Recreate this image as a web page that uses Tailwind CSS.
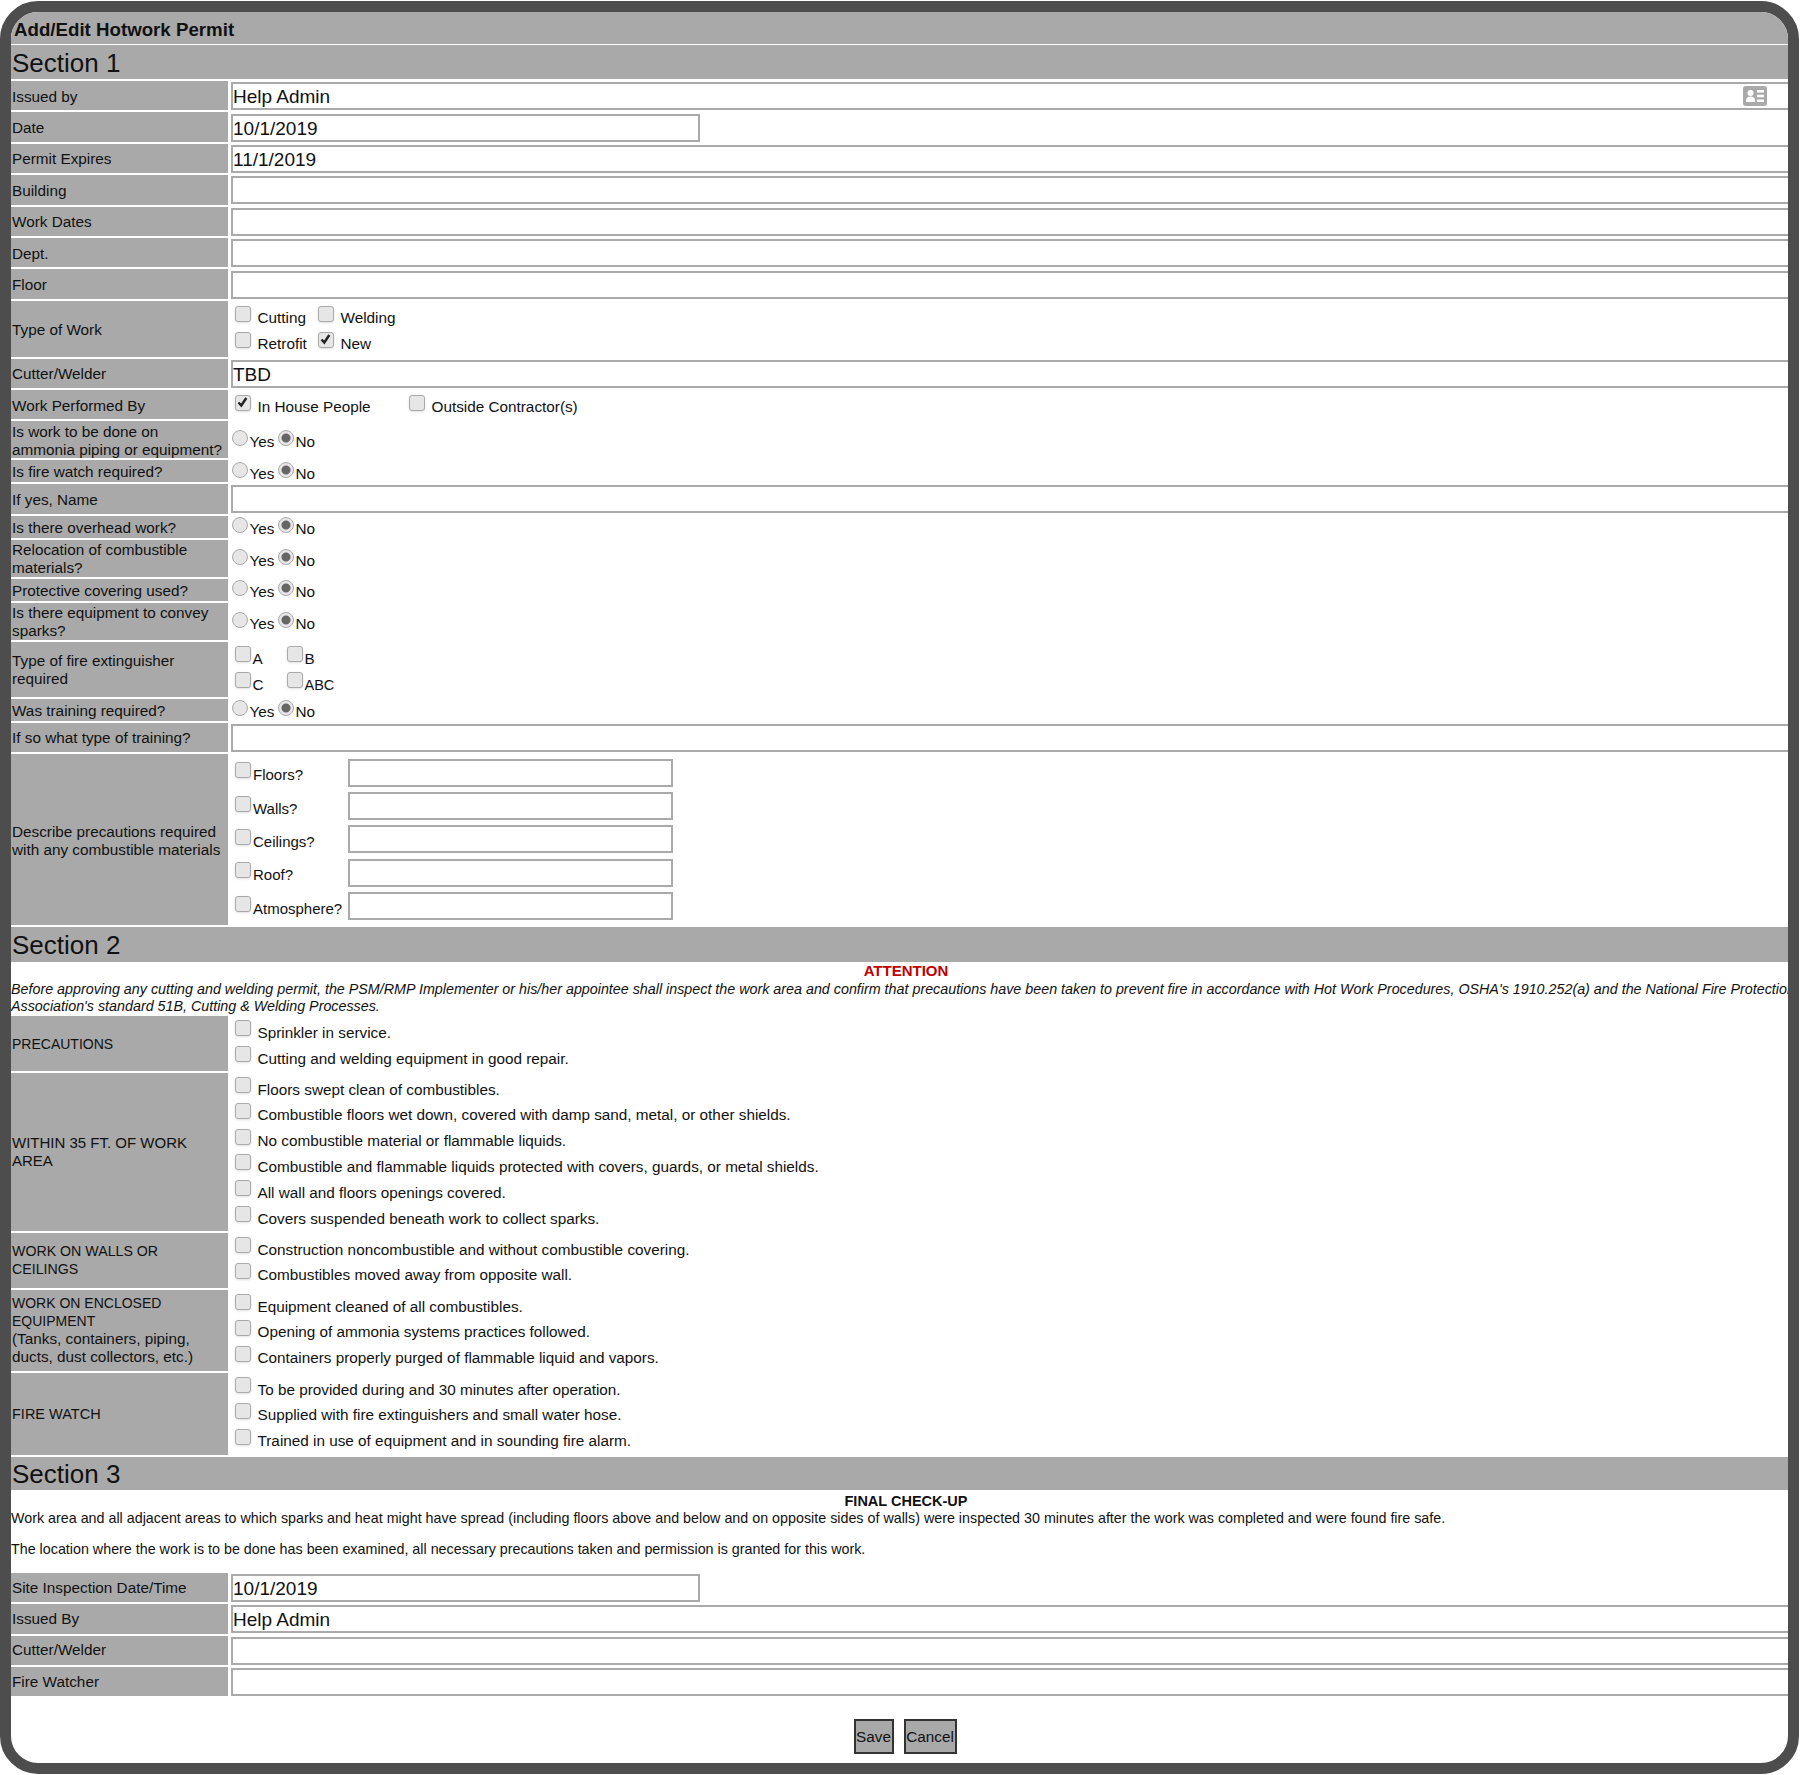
<!DOCTYPE html>
<html lang="en">
<head>
    <meta charset="UTF-8">
    <title>Add/Edit Hotwork Permit</title>
    <script src="https://cdn.jsdelivr.net/npm/@tailwindcss/browser@4"></script>
</head>
<body class="bg-white text-[#111] font-['Liberation_Sans',sans-serif] text-[15.3px] leading-[18px]">
<form class="mt-[1px] h-[1773px] w-[1799px] border-[11px] border-[#4d4d4d] rounded-[38px] overflow-hidden bg-white">

    <div class="h-[32px] bg-[#a9a9a9] flex items-center pl-[3px] pt-[3px] font-bold text-[18.7px]">Add/Edit Hotwork Permit</div>
    <div class="h-[33.7px] mt-[1px] bg-[#a9a9a9] flex items-center pl-[1px] pt-[2px] text-[26px]">Section 1</div>

    <div class="flex flex-col gap-[2px] mt-[2.3px]">
        <div class="flex h-[29.4px]">
            <div class="w-[217px] shrink-0 bg-[#a9a9a9] flex items-center pl-[1px] pt-[2px]">Issued by</div>
            <div class="relative flex-1 flex items-center"><input value="Help Admin" class="ml-[3px] mt-[1px] w-full h-[28px] border-2 border-[#aaa] border-r-0 pt-[2px] text-[19px] outline-none">
                <svg class="absolute right-[21px] top-[5px] w-[24px] h-[20px]" viewBox="0 0 24 20"><rect width="24" height="20" rx="3" fill="#a9a9a9"/><circle cx="7.500" cy="7" r="3" fill="#fff"/><path d="M3 16v-2c0-2 2-3.500 4.500-3.500s4.500 1.500 4.500 3.500v2z" fill="#fff"/><path d="M14 4h7v2.500h-7zM14 8.800h7v2.500h-7zM14 13.500h7v2.500h-7z" fill="#fff"/></svg>
            </div>
        </div>
        <div class="flex h-[29.4px]">
            <div class="w-[217px] shrink-0 bg-[#a9a9a9] flex items-center pl-[1px] pt-[2px]">Date</div>
            <div class="flex-1 flex items-center"><input value="10/1/2019" class="ml-[3px] mt-[1px] w-[469px] h-[28px] border-2 border-[#aaa] pt-[2px] text-[19px] outline-none"></div>
        </div>
        <div class="flex h-[29.4px]">
            <div class="w-[217px] shrink-0 bg-[#a9a9a9] flex items-center pl-[1px] pt-[2px]">Permit Expires</div>
            <div class="flex-1 flex items-center"><input value="11/1/2019" class="ml-[3px] mt-[1px] w-full h-[28px] border-2 border-[#aaa] border-r-0 pt-[2px] text-[19px] outline-none"></div>
        </div>
        <div class="flex h-[29.4px]">
            <div class="w-[217px] shrink-0 bg-[#a9a9a9] flex items-center pl-[1px] pt-[2px]">Building</div>
            <div class="flex-1 flex items-center"><input class="ml-[3px] mt-[1px] w-full h-[28px] border-2 border-[#aaa] border-r-0 outline-none"></div>
        </div>
        <div class="flex h-[29.4px]">
            <div class="w-[217px] shrink-0 bg-[#a9a9a9] flex items-center pl-[1px] pt-[2px]">Work Dates</div>
            <div class="flex-1 flex items-center"><input class="ml-[3px] mt-[1px] w-full h-[28px] border-2 border-[#aaa] border-r-0 outline-none"></div>
        </div>
        <div class="flex h-[29.4px]">
            <div class="w-[217px] shrink-0 bg-[#a9a9a9] flex items-center pl-[1px] pt-[2px]">Dept.</div>
            <div class="flex-1 flex items-center"><input class="ml-[3px] mt-[1px] w-full h-[28px] border-2 border-[#aaa] border-r-0 outline-none"></div>
        </div>
        <div class="flex h-[29.4px]">
            <div class="w-[217px] shrink-0 bg-[#a9a9a9] flex items-center pl-[1px] pt-[2px]">Floor</div>
            <div class="flex-1 flex items-center"><input class="ml-[3px] mt-[1px] w-full h-[28px] border-2 border-[#aaa] border-r-0 outline-none"></div>
        </div>

        <div class="flex h-[55.800px]">
            <div class="w-[217px] shrink-0 bg-[#a9a9a9] flex items-center pl-[1px] pt-[2px]">Type of Work</div>
            <div class="flex-1 pl-[6.500px] pt-[5.200px]">
                <div class="flex h-[25.800px]">
                    <label class="flex w-[83px]"><input type="checkbox" class="appearance-none w-[16px] h-[16px] rounded-[3px] border border-[#aaa] bg-[#e6e6e6] shadow-sm"><span class="ml-[7px] mt-[3.500px]">Cutting</span></label>
                    <label class="flex"><input type="checkbox" class="appearance-none w-[16px] h-[16px] rounded-[3px] border border-[#aaa] bg-[#e6e6e6] shadow-sm"><span class="ml-[7px] mt-[3.500px]">Welding</span></label>
                </div>
                <div class="flex h-[25.800px]">
                    <label class="flex w-[83px]"><input type="checkbox" class="appearance-none w-[16px] h-[16px] rounded-[3px] border border-[#aaa] bg-[#e6e6e6] shadow-sm"><span class="ml-[7px] mt-[3.500px]">Retrofit</span></label>
                    <label class="flex"><span class="relative w-[16px] h-[16px]"><input type="checkbox" checked class="appearance-none w-[16px] h-[16px] rounded-[3px] border border-[#aaa] bg-[#e6e6e6] shadow-sm"><svg class="absolute left-[2.500px] top-[2.500px] w-[11px] h-[11px]" viewBox="0 0 11 11"><path d="M1.500 5.500l2.800 3 5-7.500" fill="none" stroke="#222" stroke-width="2.400"/></svg></span><span class="ml-[7px] mt-[3.500px]">New</span></label>
                </div>
            </div>
        </div>

        <div class="flex h-[29.4px]">
            <div class="w-[217px] shrink-0 bg-[#a9a9a9] flex items-center pl-[1px] pt-[2px]">Cutter/Welder</div>
            <div class="flex-1 flex items-center"><input value="TBD" class="ml-[3px] mt-[1px] w-full h-[28px] border-2 border-[#aaa] border-r-0 pt-[2px] text-[19px] outline-none"></div>
        </div>

        <div class="flex h-[29.4px]">
            <div class="w-[217px] shrink-0 bg-[#a9a9a9] flex items-center pl-[1px] pt-[2px]">Work Performed By</div>
            <div class="flex-1 pl-[6.500px] pt-[5px] flex">
                <label class="flex w-[174px]"><span class="relative w-[16px] h-[16px]"><input type="checkbox" checked class="appearance-none w-[16px] h-[16px] rounded-[3px] border border-[#aaa] bg-[#e6e6e6] shadow-sm"><svg class="absolute left-[2.500px] top-[2.500px] w-[11px] h-[11px]" viewBox="0 0 11 11"><path d="M1.500 5.500l2.800 3 5-7.500" fill="none" stroke="#222" stroke-width="2.400"/></svg></span><span class="ml-[7px] mt-[3px]">In House People</span></label>
                <label class="flex"><input type="checkbox" class="appearance-none w-[16px] h-[16px] rounded-[3px] border border-[#aaa] bg-[#e6e6e6] shadow-sm"><span class="ml-[7px] mt-[3px]">Outside Contractor(s)</span></label>
            </div>
        </div>

        <div class="flex h-[37px]">
            <div class="w-[217px] shrink-0 bg-[#a9a9a9] flex items-center pl-[1px] pt-[2px] whitespace-nowrap">Is work to be done on<br>ammonia piping or equipment?</div>
            <div class="flex-1 flex items-center pl-[4px] pt-[2px]">
                <label class="flex h-[21px] w-[46px]"><input type="radio" name="q1" class="appearance-none w-[16px] h-[16px] rounded-full border border-[#aaa] bg-[#e6e6e6]"><span class="ml-[1.500px] mt-[3px]">Yes</span></label>
                <label class="flex h-[21px]"><input type="radio" name="q1" checked class="appearance-none w-[16px] h-[16px] rounded-full border border-[#aaa] bg-[radial-gradient(circle,#666_0,#666_4px,#e6e6e6_5px)]"><span class="ml-[1.500px] mt-[3px]">No</span></label>
            </div>
        </div>
        <div class="flex h-[22px]">
            <div class="w-[217px] shrink-0 bg-[#a9a9a9] flex items-center pl-[1px] pt-[2px]">Is fire watch required?</div>
            <div class="flex-1 flex items-center pl-[4px] pt-[2px]">
                <label class="flex h-[21px] w-[46px]"><input type="radio" name="q2" class="appearance-none w-[16px] h-[16px] rounded-full border border-[#aaa] bg-[#e6e6e6]"><span class="ml-[1.500px] mt-[3px]">Yes</span></label>
                <label class="flex h-[21px]"><input type="radio" name="q2" checked class="appearance-none w-[16px] h-[16px] rounded-full border border-[#aaa] bg-[radial-gradient(circle,#666_0,#666_4px,#e6e6e6_5px)]"><span class="ml-[1.500px] mt-[3px]">No</span></label>
            </div>
        </div>
        <div class="flex h-[29.4px]">
            <div class="w-[217px] shrink-0 bg-[#a9a9a9] flex items-center pl-[1px] pt-[2px]">If yes, Name</div>
            <div class="flex-1 flex items-center"><input class="ml-[3px] mt-[1px] w-full h-[28px] border-2 border-[#aaa] border-r-0 outline-none"></div>
        </div>
        <div class="flex h-[22px]">
            <div class="w-[217px] shrink-0 bg-[#a9a9a9] flex items-center pl-[1px] pt-[2px]">Is there overhead work?</div>
            <div class="flex-1 flex items-center pl-[4px] pt-[2px]">
                <label class="flex h-[21px] w-[46px]"><input type="radio" name="q3" class="appearance-none w-[16px] h-[16px] rounded-full border border-[#aaa] bg-[#e6e6e6]"><span class="ml-[1.500px] mt-[3px]">Yes</span></label>
                <label class="flex h-[21px]"><input type="radio" name="q3" checked class="appearance-none w-[16px] h-[16px] rounded-full border border-[#aaa] bg-[radial-gradient(circle,#666_0,#666_4px,#e6e6e6_5px)]"><span class="ml-[1.500px] mt-[3px]">No</span></label>
            </div>
        </div>
        <div class="flex h-[37px]">
            <div class="w-[217px] shrink-0 bg-[#a9a9a9] flex items-center pl-[1px] pt-[2px] whitespace-nowrap">Relocation of combustible<br>materials?</div>
            <div class="flex-1 flex items-center pl-[4px] pt-[2px]">
                <label class="flex h-[21px] w-[46px]"><input type="radio" name="q4" class="appearance-none w-[16px] h-[16px] rounded-full border border-[#aaa] bg-[#e6e6e6]"><span class="ml-[1.500px] mt-[3px]">Yes</span></label>
                <label class="flex h-[21px]"><input type="radio" name="q4" checked class="appearance-none w-[16px] h-[16px] rounded-full border border-[#aaa] bg-[radial-gradient(circle,#666_0,#666_4px,#e6e6e6_5px)]"><span class="ml-[1.500px] mt-[3px]">No</span></label>
            </div>
        </div>
        <div class="flex h-[22px]">
            <div class="w-[217px] shrink-0 bg-[#a9a9a9] flex items-center pl-[1px] pt-[2px]">Protective covering used?</div>
            <div class="flex-1 flex items-center pl-[4px] pt-[2px]">
                <label class="flex h-[21px] w-[46px]"><input type="radio" name="q5" class="appearance-none w-[16px] h-[16px] rounded-full border border-[#aaa] bg-[#e6e6e6]"><span class="ml-[1.500px] mt-[3px]">Yes</span></label>
                <label class="flex h-[21px]"><input type="radio" name="q5" checked class="appearance-none w-[16px] h-[16px] rounded-full border border-[#aaa] bg-[radial-gradient(circle,#666_0,#666_4px,#e6e6e6_5px)]"><span class="ml-[1.500px] mt-[3px]">No</span></label>
            </div>
        </div>
        <div class="flex h-[37px]">
            <div class="w-[217px] shrink-0 bg-[#a9a9a9] flex items-center pl-[1px] pt-[2px] whitespace-nowrap">Is there equipment to convey<br>sparks?</div>
            <div class="flex-1 flex items-center pl-[4px] pt-[2px]">
                <label class="flex h-[21px] w-[46px]"><input type="radio" name="q6" class="appearance-none w-[16px] h-[16px] rounded-full border border-[#aaa] bg-[#e6e6e6]"><span class="ml-[1.500px] mt-[3px]">Yes</span></label>
                <label class="flex h-[21px]"><input type="radio" name="q6" checked class="appearance-none w-[16px] h-[16px] rounded-full border border-[#aaa] bg-[radial-gradient(circle,#666_0,#666_4px,#e6e6e6_5px)]"><span class="ml-[1.500px] mt-[3px]">No</span></label>
            </div>
        </div>

        <div class="flex h-[55px]">
            <div class="w-[217px] shrink-0 bg-[#a9a9a9] flex items-center pl-[1px] pt-[2px] whitespace-nowrap">Type of fire extinguisher<br>required</div>
            <div class="flex-1 pl-[6.500px] pt-[4.500px]">
                <div class="flex h-[25.500px]">
                    <label class="flex w-[52px]"><input type="checkbox" class="appearance-none w-[16px] h-[16px] rounded-[3px] border border-[#aaa] bg-[#e6e6e6] shadow-sm"><span class="ml-[2px] mt-[4px]">A</span></label>
                    <label class="flex"><input type="checkbox" class="appearance-none w-[16px] h-[16px] rounded-[3px] border border-[#aaa] bg-[#e6e6e6] shadow-sm"><span class="ml-[2px] mt-[4px]">B</span></label>
                </div>
                <div class="flex h-[25.500px]">
                    <label class="flex w-[52px]"><input type="checkbox" class="appearance-none w-[16px] h-[16px] rounded-[3px] border border-[#aaa] bg-[#e6e6e6] shadow-sm"><span class="ml-[2px] mt-[4px]">C</span></label>
                    <label class="flex"><input type="checkbox" class="appearance-none w-[16px] h-[16px] rounded-[3px] border border-[#aaa] bg-[#e6e6e6] shadow-sm"><span class="ml-[2px] mt-[4px] text-[14.5px]">ABC</span></label>
                </div>
            </div>
        </div>

        <div class="flex h-[22px]">
            <div class="w-[217px] shrink-0 bg-[#a9a9a9] flex items-center pl-[1px] pt-[2px]">Was training required?</div>
            <div class="flex-1 flex items-center pl-[4px] pt-[2px]">
                <label class="flex h-[21px] w-[46px]"><input type="radio" name="q7" class="appearance-none w-[16px] h-[16px] rounded-full border border-[#aaa] bg-[#e6e6e6]"><span class="ml-[1.500px] mt-[3px]">Yes</span></label>
                <label class="flex h-[21px]"><input type="radio" name="q7" checked class="appearance-none w-[16px] h-[16px] rounded-full border border-[#aaa] bg-[radial-gradient(circle,#666_0,#666_4px,#e6e6e6_5px)]"><span class="ml-[1.500px] mt-[3px]">No</span></label>
            </div>
        </div>
        <div class="flex h-[29.4px]">
            <div class="w-[217px] shrink-0 bg-[#a9a9a9] flex items-center pl-[1px] pt-[2px]">If so what type of training?</div>
            <div class="flex-1 flex items-center"><input class="ml-[3px] mt-[1px] w-full h-[28px] border-2 border-[#aaa] border-r-0 outline-none"></div>
        </div>

        <div class="flex h-[171px]">
            <div class="w-[217px] shrink-0 bg-[#a9a9a9] flex items-center pl-[1px] pt-[2px] whitespace-nowrap">Describe precautions required<br>with any combustible materials</div>
            <div class="flex-1 pl-[6.500px] pt-[4.600px] text-[15px]">
                <div class="flex h-[33.400px]">
                    <label class="flex w-[113.500px] pt-[3.500px]"><input type="checkbox" class="appearance-none w-[16px] h-[16px] rounded-[3px] border border-[#aaa] bg-[#e6e6e6] shadow-sm"><span class="ml-[2.500px] mt-[4px]">Floors?</span></label>
                    <input class="w-[325px] h-[28px] border-2 border-[#aaa] outline-none">
                </div>
                <div class="flex h-[33.400px]">
                    <label class="flex w-[113.500px] pt-[3.500px]"><input type="checkbox" class="appearance-none w-[16px] h-[16px] rounded-[3px] border border-[#aaa] bg-[#e6e6e6] shadow-sm"><span class="ml-[2.500px] mt-[4px]">Walls?</span></label>
                    <input class="w-[325px] h-[28px] border-2 border-[#aaa] outline-none">
                </div>
                <div class="flex h-[33.400px]">
                    <label class="flex w-[113.500px] pt-[3.500px]"><input type="checkbox" class="appearance-none w-[16px] h-[16px] rounded-[3px] border border-[#aaa] bg-[#e6e6e6] shadow-sm"><span class="ml-[2.500px] mt-[4px]">Ceilings?</span></label>
                    <input class="w-[325px] h-[28px] border-2 border-[#aaa] outline-none">
                </div>
                <div class="flex h-[33.400px]">
                    <label class="flex w-[113.500px] pt-[3.500px]"><input type="checkbox" class="appearance-none w-[16px] h-[16px] rounded-[3px] border border-[#aaa] bg-[#e6e6e6] shadow-sm"><span class="ml-[2.500px] mt-[4px]">Roof?</span></label>
                    <input class="w-[325px] h-[28px] border-2 border-[#aaa] outline-none">
                </div>
                <div class="flex h-[33.400px]">
                    <label class="flex w-[113.500px] pt-[3.500px] whitespace-nowrap"><input type="checkbox" class="appearance-none shrink-0 w-[16px] h-[16px] rounded-[3px] border border-[#aaa] bg-[#e6e6e6] shadow-sm"><span class="ml-[2.500px] mt-[4px]">Atmosphere?</span></label>
                    <input class="w-[325px] h-[28px] border-2 border-[#aaa] outline-none">
                </div>
            </div>
        </div>
    </div>

    <div class="h-[34.800px] mt-[2px] bg-[#a9a9a9] flex items-center pl-[1px] pt-[2px] text-[26px]">Section 2</div>
    <div class="h-[54px] w-[1790px]">
        <p class="h-[19px] text-center font-bold text-[15px] text-[#c00000]">ATTENTION</p>
        <p class="italic whitespace-nowrap text-[14.3px] leading-[17.500px]">Before approving any cutting and welding permit, the PSM/RMP Implementer or his/her appointee shall inspect the work area and confirm that precautions have been taken to prevent fire in accordance with Hot Work Procedures, OSHA's 1910.252(a) and the National Fire Protection<br>Association's standard 51B, Cutting &amp; Welding Processes.</p>
    </div>

    <div class="flex flex-col gap-[2px] text-[15.3px]">
        <div class="flex h-[55px]">
            <div class="w-[217px] shrink-0 bg-[#a9a9a9] flex items-center pl-[1px] pt-[2px] text-[14px]">PRECAUTIONS</div>
            <div class="flex-1 pl-[6.500px] pt-[4.500px]">
                <label class="flex h-[25.800px]"><input type="checkbox" class="appearance-none w-[16px] h-[16px] rounded-[3px] border border-[#aaa] bg-[#e6e6e6] shadow-sm"><span class="ml-[7px] mt-[3.500px]">Sprinkler in service.</span></label>
                <label class="flex h-[25.800px]"><input type="checkbox" class="appearance-none w-[16px] h-[16px] rounded-[3px] border border-[#aaa] bg-[#e6e6e6] shadow-sm"><span class="ml-[7px] mt-[3.500px]">Cutting and welding equipment in good repair.</span></label>
            </div>
        </div>
        <div class="flex h-[158px]">
            <div class="w-[217px] shrink-0 bg-[#a9a9a9] flex items-center pl-[1px] text-[15px] whitespace-nowrap">WITHIN 35 FT. OF WORK<br>AREA</div>
            <div class="flex-1 pl-[6.500px] pt-[4.200px]">
                <label class="flex h-[25.800px]"><input type="checkbox" class="appearance-none w-[16px] h-[16px] rounded-[3px] border border-[#aaa] bg-[#e6e6e6] shadow-sm"><span class="ml-[7px] mt-[3.500px]">Floors swept clean of combustibles.</span></label>
                <label class="flex h-[25.800px]"><input type="checkbox" class="appearance-none w-[16px] h-[16px] rounded-[3px] border border-[#aaa] bg-[#e6e6e6] shadow-sm"><span class="ml-[7px] mt-[3.500px]">Combustible floors wet down, covered with damp sand, metal, or other shields.</span></label>
                <label class="flex h-[25.800px]"><input type="checkbox" class="appearance-none w-[16px] h-[16px] rounded-[3px] border border-[#aaa] bg-[#e6e6e6] shadow-sm"><span class="ml-[7px] mt-[3.500px]">No combustible material or flammable liquids.</span></label>
                <label class="flex h-[25.800px]"><input type="checkbox" class="appearance-none w-[16px] h-[16px] rounded-[3px] border border-[#aaa] bg-[#e6e6e6] shadow-sm"><span class="ml-[7px] mt-[3.500px]">Combustible and flammable liquids protected with covers, guards, or metal shields.</span></label>
                <label class="flex h-[25.800px]"><input type="checkbox" class="appearance-none w-[16px] h-[16px] rounded-[3px] border border-[#aaa] bg-[#e6e6e6] shadow-sm"><span class="ml-[7px] mt-[3.500px]">All wall and floors openings covered.</span></label>
                <label class="flex h-[25.800px]"><input type="checkbox" class="appearance-none w-[16px] h-[16px] rounded-[3px] border border-[#aaa] bg-[#e6e6e6] shadow-sm"><span class="ml-[7px] mt-[3.500px]">Covers suspended beneath work to collect sparks.</span></label>
            </div>
        </div>
        <div class="flex h-[55px]">
            <div class="w-[217px] shrink-0 bg-[#a9a9a9] flex items-center pl-[1px] text-[14.2px] whitespace-nowrap">WORK ON WALLS OR<br>CEILINGS</div>
            <div class="flex-1 pl-[6.500px] pt-[4.200px]">
                <label class="flex h-[25.800px]"><input type="checkbox" class="appearance-none w-[16px] h-[16px] rounded-[3px] border border-[#aaa] bg-[#e6e6e6] shadow-sm"><span class="ml-[7px] mt-[3.500px]">Construction noncombustible and without combustible covering.</span></label>
                <label class="flex h-[25.800px]"><input type="checkbox" class="appearance-none w-[16px] h-[16px] rounded-[3px] border border-[#aaa] bg-[#e6e6e6] shadow-sm"><span class="ml-[7px] mt-[3.500px]">Combustibles moved away from opposite wall.</span></label>
            </div>
        </div>
        <div class="flex h-[81px]">
            <div class="w-[217px] shrink-0 bg-[#a9a9a9] flex items-center pl-[1px] whitespace-nowrap"><div><span class="text-[14px]">WORK ON ENCLOSED<br>EQUIPMENT</span><br><span class="text-[15.3px]">(Tanks, containers, piping,<br>ducts, dust collectors, etc.)</span></div></div>
            <div class="flex-1 pl-[6.500px] pt-[4.200px]">
                <label class="flex h-[25.800px]"><input type="checkbox" class="appearance-none w-[16px] h-[16px] rounded-[3px] border border-[#aaa] bg-[#e6e6e6] shadow-sm"><span class="ml-[7px] mt-[3.500px]">Equipment cleaned of all combustibles.</span></label>
                <label class="flex h-[25.800px]"><input type="checkbox" class="appearance-none w-[16px] h-[16px] rounded-[3px] border border-[#aaa] bg-[#e6e6e6] shadow-sm"><span class="ml-[7px] mt-[3.500px]">Opening of ammonia systems practices followed.</span></label>
                <label class="flex h-[25.800px]"><input type="checkbox" class="appearance-none w-[16px] h-[16px] rounded-[3px] border border-[#aaa] bg-[#e6e6e6] shadow-sm"><span class="ml-[7px] mt-[3.500px]">Containers properly purged of flammable liquid and vapors.</span></label>
            </div>
        </div>
        <div class="flex h-[82px]">
            <div class="w-[217px] shrink-0 bg-[#a9a9a9] flex items-center pl-[1px] text-[14.5px]">FIRE WATCH</div>
            <div class="flex-1 pl-[6.500px] pt-[4.200px]">
                <label class="flex h-[25.800px]"><input type="checkbox" class="appearance-none w-[16px] h-[16px] rounded-[3px] border border-[#aaa] bg-[#e6e6e6] shadow-sm"><span class="ml-[7px] mt-[3.500px]">To be provided during and 30 minutes after operation.</span></label>
                <label class="flex h-[25.800px]"><input type="checkbox" class="appearance-none w-[16px] h-[16px] rounded-[3px] border border-[#aaa] bg-[#e6e6e6] shadow-sm"><span class="ml-[7px] mt-[3.500px]">Supplied with fire extinguishers and small water hose.</span></label>
                <label class="flex h-[25.800px]"><input type="checkbox" class="appearance-none w-[16px] h-[16px] rounded-[3px] border border-[#aaa] bg-[#e6e6e6] shadow-sm"><span class="ml-[7px] mt-[3.500px]">Trained in use of equipment and in sounding fire alarm.</span></label>
            </div>
        </div>
    </div>

    <div class="h-[33px] mt-[2px] bg-[#a9a9a9] flex items-center pl-[1px] pt-[2px] text-[26px]">Section 3</div>
    <div class="h-[83px] w-[1790px] pt-[2px] text-[14.3px]">
        <p class="h-[17px] text-center font-bold text-[14.5px]">FINAL CHECK-UP</p>
        <p class="whitespace-nowrap">Work area and all adjacent areas to which sparks and heat might have spread (including floors above and below and on opposite sides of walls) were inspected 30 minutes after the work was completed and were found fire safe.</p>
        <p class="whitespace-nowrap mt-[13px]">The location where the work is to be done has been examined, all necessary precautions taken and permission is granted for this work.</p>
    </div>

    <div class="flex flex-col gap-[2px]">
        <div class="flex h-[29.4px]">
            <div class="w-[217px] shrink-0 bg-[#a9a9a9] flex items-center pl-[1px]">Site Inspection Date/Time</div>
            <div class="flex-1 flex items-center"><input value="10/1/2019" class="ml-[3px] mt-[1px] w-[469px] h-[28px] border-2 border-[#aaa] pt-[2px] text-[19px] outline-none"></div>
        </div>
        <div class="flex h-[29.4px]">
            <div class="w-[217px] shrink-0 bg-[#a9a9a9] flex items-center pl-[1px]">Issued By</div>
            <div class="flex-1 flex items-center"><input value="Help Admin" class="ml-[3px] mt-[1px] w-full h-[28px] border-2 border-[#aaa] border-r-0 pt-[2px] text-[19px] outline-none"></div>
        </div>
        <div class="flex h-[29.4px]">
            <div class="w-[217px] shrink-0 bg-[#a9a9a9] flex items-center pl-[1px]">Cutter/Welder</div>
            <div class="flex-1 flex items-center"><input class="ml-[3px] mt-[1px] w-full h-[28px] border-2 border-[#aaa] border-r-0 outline-none"></div>
        </div>
        <div class="flex h-[29.4px]">
            <div class="w-[217px] shrink-0 bg-[#a9a9a9] flex items-center pl-[1px]">Fire Watcher</div>
            <div class="flex-1 flex items-center"><input class="ml-[3px] mt-[1px] w-full h-[28px] border-2 border-[#aaa] border-r-0 outline-none"></div>
        </div>
    </div>

    <div class="w-[1788px] mt-[22.400px] flex justify-center gap-[10px]">
        <button type="button" class="w-[40px] h-[35.500px] border-2 border-[#333] bg-[#a9a9a9]">Save</button>
        <button type="button" class="w-[53px] h-[35.500px] border-2 border-[#333] bg-[#a9a9a9]">Cancel</button>
    </div>
</form>
</body>
</html>
